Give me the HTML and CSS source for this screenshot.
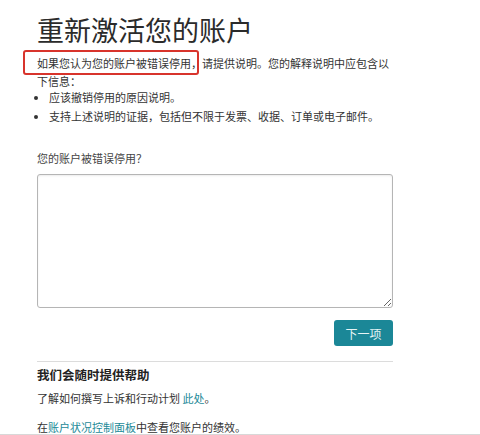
FILE: index.html
```html
<!DOCTYPE html>
<html lang="zh-CN">
<head>
  <meta charset="UTF-8" />
  <title>重新激活您的账户</title>
  <meta name="viewport" content="width=device-width, initial-scale=1.0"/>
  <link rel="stylesheet" href="styles.css">
</head>
<body>

  <div class="page">
    <h1>重新激活您的账户</h1>

    <p class="intro"><span class="mark">如果您认为您的账户被错误停用</span>，请提供说明。您的解释说明中应包含以下信息：</p>
    <ul class="points">
      <li>应该撤销停用的原因说明。</li>
      <li>支持上述说明的证据，包括但不限于发票、收据、订单或电子邮件。</li>
    </ul>

    <!-- APPEAL FORM -->
    <div class="form">
      <label for="reason">您的账户被错误停用？</label>
      <textarea id="reason"></textarea>
      <div class="actions">
        <button>下一项</button>
      </div>
    </div>

    <!-- HELP -->
    <div class="help">
      <h2>我们会随时提供帮助</h2>
      <p>了解如何撰写上诉和行动计划 <a href="#">此处</a>。</p>
      <p class="last">在<a href="#">账户状况控制面板</a>中查看您账户的绩效。</p>
    </div>
  </div>

</body>
</html>
```

FILE: styles.css
```css
body {
  margin: 0;
  font-family: "Noto Sans CJK SC", "Liberation Sans", sans-serif;
  background: #fff;
  color: #333;
}

.page {
  box-sizing: border-box;
  width: 100%;
  height: 435px;
  padding: 0 0 0 37px;
  border-bottom: 1px solid #d8d8d8;
}

h1 {
  margin: 0;
  padding-top: 12px;
  font-size: 27px;
  font-weight: normal;
  line-height: 36px;
  color: #2b2b2b;
}

.intro {
  width: 356px;
  margin: 6px 0 0;
  font-size: 11px;
  line-height: 18px;
}

.mark {
  position: relative;
}

.mark::after {
  content: "";
  position: absolute;
  left: -14px;
  right: -8px;
  top: -5px;
  bottom: -4px;
  border: 2px solid #d8342c;
  border-radius: 3px;
}

.points {
  margin: -2px 0 0;
  padding: 0 0 0 12px;
  font-size: 11px;
  line-height: 19px;
}

.form {
  width: 356px;
  margin-top: 24px;
}

label {
  display: block;
  font-size: 11px;
  line-height: 16px;
  color: #444;
}

textarea {
  display: block;
  box-sizing: border-box;
  width: 356px;
  height: 134px;
  margin-top: 8px;
  border: 1px solid #b5b5b5;
  border-radius: 3px;
  box-shadow: inset 0 1px 2px rgba(0, 0, 0, 0.08);
}

.actions {
  display: flex;
  justify-content: flex-end;
  margin-top: 12px;
}

button {
  width: 59px;
  height: 26px;
  border: none;
  border-radius: 3px;
  background: #1b8797;
  color: #e6f4f5;
  font-family: inherit;
  font-size: 12px;
  cursor: pointer;
}

.help {
  width: 356px;
  margin-top: 15px;
  border-top: 1px solid #dcdcdc;
}

.help h2 {
  margin: 2px 0 0;
  font-size: 12.5px;
  line-height: 22px;
  color: #222;
}

.help p {
  margin: 3px 0 0;
  font-size: 11px;
  line-height: 18px;
}

.help p.last {
  margin-top: 14px;
  line-height: 13px;
}

a {
  color: #1d8a98;
  text-decoration: none;
}
```
